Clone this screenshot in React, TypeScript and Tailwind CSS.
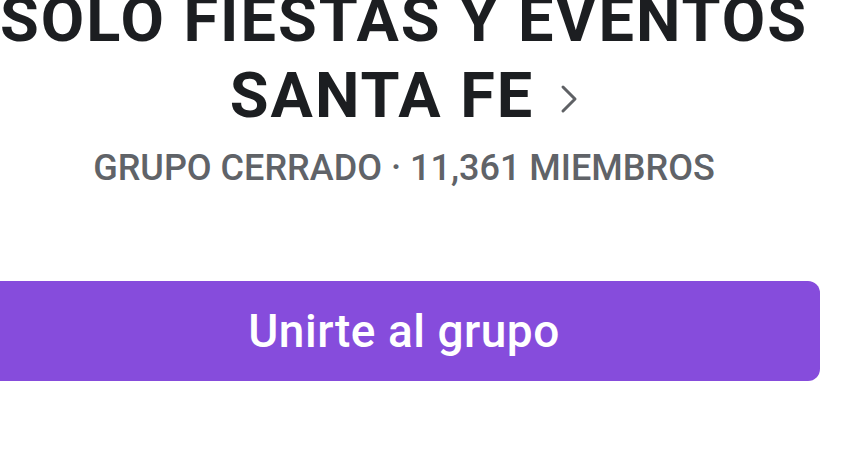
import React from "react";

export default function App() {
  return (
    <div className="w-[860px] h-[461px] overflow-hidden bg-white" style={{ fontFamily: "Roboto, 'Noto Sans', sans-serif" }}>
      <div className="ml-[-12px] w-[832px] flex flex-col items-center">
        <h1 className="mt-[-18px] text-center text-[63px] leading-[76px] font-bold tracking-[2px] text-[#1c1e21] whitespace-nowrap">
          <div>SOLO FIESTAS Y EVENTOS</div>
          <div className="flex items-center justify-center">
            <span>SANTA FE</span>
            <svg className="ml-[26px] mt-[6px]" width="18" height="30" viewBox="0 0 18 30" fill="none">
              <path d="M3 3 L15 15 L3 27" stroke="#5f6165" strokeWidth="3" strokeLinecap="round" strokeLinejoin="round" />
            </svg>
          </div>
        </h1>
        <p className="mt-[12px] text-[36px] leading-[44px] font-medium text-[#606368] whitespace-nowrap">
          GRUPO CERRADO · 11,361 MIEMBROS
        </p>
        <button className="mt-[91px] w-full h-[100px] rounded-[12px] bg-[#864cdc] text-white text-[46px] font-medium tracking-[0.5px] flex items-center justify-center">
          Unirte al grupo
        </button>
      </div>
    </div>
  );
}
